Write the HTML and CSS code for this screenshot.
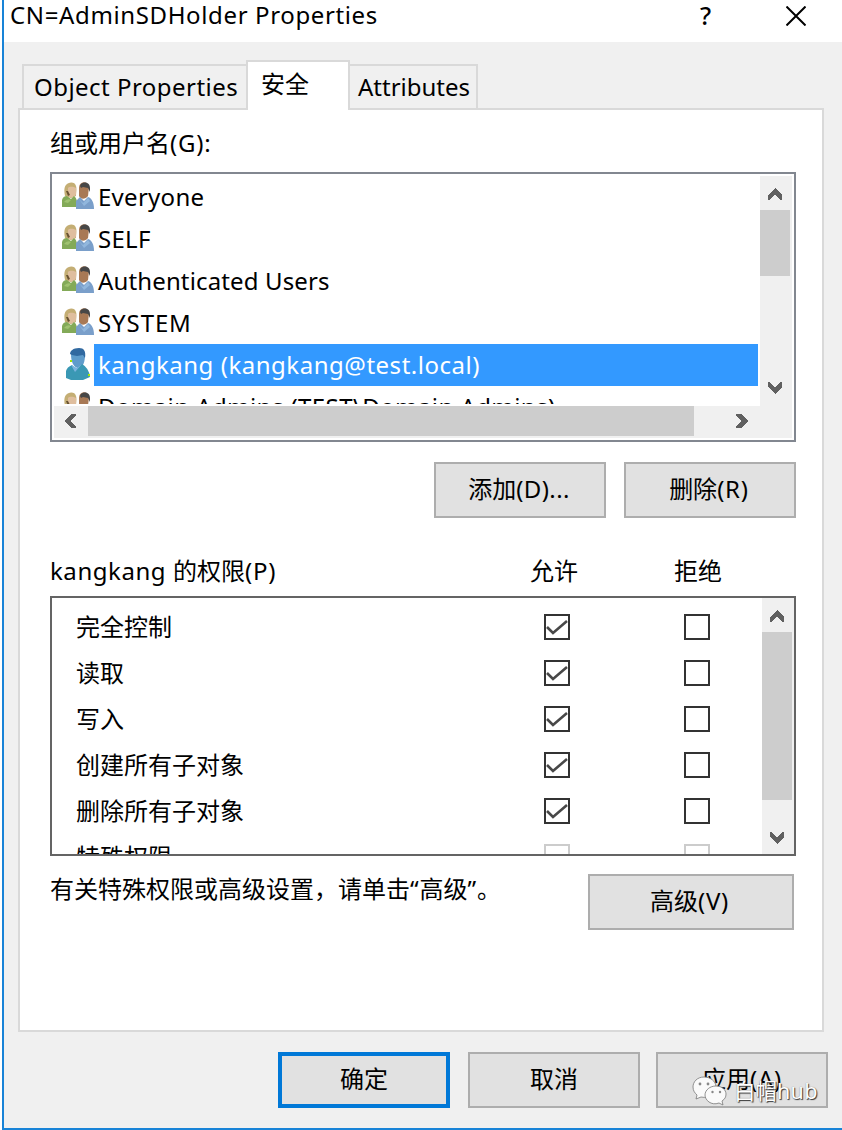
FILE: index.html
```html
<!DOCTYPE html>
<html lang="zh-CN">
<head>
<meta charset="utf-8">
<title>CN=AdminSDHolder Properties</title>
<link rel="stylesheet" href="styles.css">
</head>
<body>
<svg class="defs" aria-hidden="true">
  <symbol id="group" viewBox="0 0 32 28">
    <path d="M3 14C2 10 2 5 4 3 6 0 13-1 14 4c1 3 0 7 0 10l-5 2z" fill="#c4ae74"/>
    <path d="M6 6c2-2 6-1 8 0v6c-1 4-6 5-8 1z" fill="#dfbe9e"/>
    <path d="M4 9h2l2 4-2 1z" fill="#695332"/>
    <path d="M0 25V18q1-4 5-4l4 3 3-3q4 3 3 11z" fill="#83aa58"/>
    <path d="M2 20q3-4 7-2l-3 3z" fill="#9fc270"/>
    <path d="M17 6c0-7 9-8 10-1l-1 9c-3 4-8 3-9 0z" fill="#a87955"/>
    <path d="M18 4c1-5 10-5 10 2v4l-2-4-5-1-2 1z" fill="#474747"/>
    <path d="M14 27v-8l4-4 4 4 4-4c4 1 6 6 6 12z" fill="#7a9fca"/>
    <path d="M17 17l4 4 5-5 2 3-6 5z" fill="#91b7dd"/>
  </symbol>
  <symbol id="user" viewBox="0 0 24 32">
    <path d="M5 6c0 7 2 13 7 14 6-1 7-7 7-14z" fill="#5f9ccb"/>
    <path d="M4 6c0-3 3-6 9-6 5 0 7 3 6 10l-2-3-6 1-5-1z" fill="#3169a0"/>
    <path d="M0 30V23q1-4 6-6l4 4 6-5q7 4 8 13l-7 3H5z" fill="#3a98b4"/>
    <path d="M5 17l4 7 7-8-5 4z" fill="#7bb4de"/>
    <path d="M4 12h2v2H4zM22 26h2v2h-2z" fill="#a4e900"/>
  </symbol>
  <symbol id="chev" viewBox="0 0 14 12"><path d="M0 7L7 0l7 7v5h-2L7 6 2 12H0z" fill="#606060"/></symbol>
</svg>
<main class="window">
  <header class="titlebar">
    <span class="title t-title">CN=AdminSDHolder Properties</span>
    <span class="help">?</span>
    <svg class="close" viewBox="0 0 20 20"><path d="M.5.5l19 19M19.5.5l-19 19"/></svg>
  </header>
  <nav class="tabs">
    <div class="tab tab-object"><span class="t-object">Object Properties</span></div>
    <div class="tab tab-active">安全</div>
    <div class="tab tab-attr"><span class="t-attr">Attributes</span></div>
  </nav>
  <section class="panel">
    <div class="label label-groups">组或用户名<span class="t-par">(G):</span></div>
    <div class="groups">
      <div class="groups-top">
        <ul class="names">
          <li><svg class="ico"><use href="#group"/></svg><span class="t-everyone">Everyone</span></li>
          <li><svg class="ico"><use href="#group"/></svg><span class="t-self">SELF</span></li>
          <li><svg class="ico"><use href="#group"/></svg><span class="t-auth">Authenticated Users</span></li>
          <li><svg class="ico"><use href="#group"/></svg><span class="t-system">SYSTEM</span></li>
          <li class="selected"><svg class="ico ico-user"><use href="#user"/></svg><span class="t-kang">kangkang (kangkang@test.local)</span></li>
          <li><svg class="ico"><use href="#group"/></svg><span class="t-domain">Domain Admins (TEST\Domain Admins)</span></li>
        </ul>
        <div class="vbar">
          <svg class="chev"><use href="#chev"/></svg>
          <div class="thumb"></div>
          <svg class="chev down"><use href="#chev"/></svg>
        </div>
      </div>
      <div class="hbar">
        <svg class="chev left"><use href="#chev"/></svg>
        <div class="thumb"></div>
        <svg class="chev right"><use href="#chev"/></svg>
      </div>
    </div>
    <div class="actions">
      <div class="btn"><span>添加<span class="t-add">(D)...</span></span></div>
      <div class="btn"><span>删除<span class="t-par">(R)</span></span></div>
    </div>
    <div class="perm-head">
      <span class="who"><span class="t-who">kangkang </span>的权限<span class="t-par">(P)</span></span>
      <span class="allow">允许</span>
      <span>拒绝</span>
    </div>
    <div class="perms">
      <ul class="perm-list">
        <li><span>完全控制</span><i class="box"><svg viewBox="0 0 22 22"><path d="M1 11l6 6L21 5"/></svg></i><i class="box"></i></li>
        <li><span>读取</span><i class="box"><svg viewBox="0 0 22 22"><path d="M1 11l6 6L21 5"/></svg></i><i class="box"></i></li>
        <li><span>写入</span><i class="box"><svg viewBox="0 0 22 22"><path d="M1 11l6 6L21 5"/></svg></i><i class="box"></i></li>
        <li><span>创建所有子对象</span><i class="box"><svg viewBox="0 0 22 22"><path d="M1 11l6 6L21 5"/></svg></i><i class="box"></i></li>
        <li><span>删除所有子对象</span><i class="box"><svg viewBox="0 0 22 22"><path d="M1 11l6 6L21 5"/></svg></i><i class="box"></i></li>
        <li class="disabled"><span>特殊权限</span><i class="box"></i><i class="box"></i></li>
      </ul>
      <div class="vbar">
        <svg class="chev"><use href="#chev"/></svg>
        <div class="thumb"></div>
        <svg class="chev down"><use href="#chev"/></svg>
      </div>
    </div>
    <div class="advanced">
      <span class="hint">有关特殊权限或高级设置，请单击<span class="t-quote">“</span>高级<span class="t-quote">”</span>。</span>
      <div class="btn btn-wide"><span>高级<span class="t-par">(V)</span></span></div>
    </div>
  </section>
  <footer class="footer">
    <div class="btn btn-default">确定</div>
    <div class="btn">取消</div>
    <div class="btn btn-apply"><span>应用<span class="t-par">(A)</span></span>
      <div class="mark">
        <svg viewBox="0 0 36 31"><g fill="#fafafa" stroke="#777" stroke-width=".8"><path d="M12 1C5 1 1 6 1 11c0 4 2 6 4 8l-1 4 5-2c9 2 15-4 15-10S18 1 12 1z"/><path d="M24 10c-6 0-11 4-11 9s6 11 14 8l4 2-1-4c3-2 4-4 4-7 0-4-4-8-10-8z"/></g><g fill="#888"><circle cx="8" cy="8" r="1.4"/><circle cx="16" cy="8" r="1.4"/><circle cx="20.500" cy="16" r="1.200"/><circle cx="28" cy="16" r="1.200"/></g></svg>
        <span>白帽<span class="t-hub">hub</span></span>
      </div>
    </div>
  </footer>
</main>
</body>
</html>
```
FILE: styles.css
```css
* { box-sizing: border-box; }
body {
  margin: 0;
  padding-left: 2px;
  width: 842px;
  height: 1130px;
  overflow: hidden;
  background: #fff;
  color: #000;
  font: 24px/32px "Noto Sans", "Noto Sans CJK SC", sans-serif;
}
.defs { position: absolute; width: 0; height: 0; }
ul { margin: 0; padding: 0; list-style: none; }
span { white-space: nowrap; }
.window {
  height: 1130px;
  border-left: 2px solid #1883d7;
  border-bottom: 2px solid #1883d7;
  background: #f0f0f0;
}
.titlebar {
  display: flex;
  align-items: flex-start;
  height: 42px;
  padding-left: 6px;
  background: #fff;
}
.title { width: 690px; margin-top: -1px; }
.help { width: 82px; margin-top: -1px; font-size: 25px; font-weight: 500; }
.close { width: 20px; height: 20px; margin-top: 6px; margin-left: 4px; fill: none; stroke: #000; stroke-width: 2; }

/* tracking per string */
.t-title { letter-spacing: .63px; }
.t-object { letter-spacing: .47px; }
.t-everyone { letter-spacing: .28px; }
.t-self { letter-spacing: .3px; }
.t-auth { letter-spacing: .14px; }
.t-system { letter-spacing: .9px; }
.t-kang { letter-spacing: .52px; }
.t-domain { letter-spacing: .42px; }
.t-who { letter-spacing: .55px; }
.t-par { letter-spacing: .8px; }
.t-add { letter-spacing: .4px; }
.t-quote { letter-spacing: .9px; }
.t-hub { letter-spacing: .3px; }

.tabs {
  display: flex;
  align-items: flex-end;
  height: 68px;
  margin-bottom: -2px;
  padding-left: 18px;
  position: relative;
  z-index: 1;
}
.tab { height: 46px; border: 2px solid #d9d9d9; padding: 5px 0 0 10px; }
.tab-object { width: 226px; }
.tab-active { width: 104px; height: 50px; margin-left: -2px; padding: 6px 0 0 13px; background: #fff; border-bottom: 0; }
.tab-attr { width: 130px; margin-left: -2px; padding-left: 8px; }

.panel {
  width: 806px;
  height: 924px;
  margin-left: 14px;
  padding: 0 26px 0 30px;
  border: 2px solid #d9d9d9;
  background: #fff;
}
.label-groups { height: 62px; padding-top: 17px; }

.groups { width: 746px; height: 270px; padding: 2px; border: 2px solid #828790; }
.groups-top { display: flex; height: 230px; }
.names { width: 706px; height: 228px; overflow: hidden; }
.names li { display: flex; height: 42px; padding-left: 8px; }
.names li span { flex: 1; height: 42px; margin-right: 2px; padding: 5px 0 0 4px; }
.names .ico { width: 32px; height: 28px; margin-top: 6px; }
.names .ico-user { width: 24px; height: 32px; margin: 4px 4px 0; }
.names .selected span { background: #3399ff; color: #fff; }
.vbar { display: flex; flex-direction: column; align-items: flex-start; width: 32px; background: #f0f0f0; }
.vbar .thumb { width: 30px; background: #cdcdcd; }
.chev { width: 14px; height: 12px; margin: 12px 0 10px 8px; shape-rendering: crispEdges; }
.down { transform: rotate(180deg); margin-top: auto; }
.groups .vbar .thumb { height: 66px; }
.groups .down { margin-bottom: 12px; }
.hbar { display: flex; align-items: flex-start; height: 32px; width: 738px; background: #f0f0f0; }
.hbar .thumb { width: 606px; height: 30px; margin-left: 11px; background: #cdcdcd; }
.left { transform: rotate(-90deg); margin: 9px 0 0 9px; }
.right { transform: rotate(90deg); margin: 9px 0 0 41px; }

.btn {
  display: flex;
  align-items: center;
  justify-content: center;
  width: 172px;
  height: 56px;
  padding-bottom: 2px;
  border: 2px solid #adadad;
  background: #e1e1e1;
}
.actions { display: flex; justify-content: flex-end; gap: 18px; margin-top: 20px; }
.actions .btn { padding-right: 2px; }

.perm-head { display: flex; height: 78px; padding-top: 37px; }
.who { width: 480px; }
.allow { width: 144px; }
.perms { display: flex; justify-content: space-between; width: 746px; height: 260px; border: 2px solid #646464; overflow: hidden; }
.perm-list { height: 256px; padding-top: 6px; overflow: hidden; }
.perm-list li { display: flex; align-items: center; height: 46px; padding-left: 24px; }
.perm-list span { width: 468px; }
.box { width: 26px; height: 26px; margin-right: 114px; border: 2px solid #333; }
.box + .box { margin-right: 0; }
.box svg { display: block; width: 22px; height: 22px; fill: none; stroke: #484848; stroke-width: 2.6; }
.disabled .box { border-color: #ccc; }
.perms .vbar .thumb { height: 168px; }

.advanced { display: flex; justify-content: space-between; width: 744px; margin-top: 18px; }
.hint { margin-top: -1px; }
.btn-wide { width: 206px; padding-right: 3px; }

.footer { display: flex; gap: 18px; margin: 20px 0 0 274px; }
.btn-default { border: 4px solid #0078d7; }
.btn-apply { position: relative; margin-left: -2px; }
.mark { position: absolute; left: 34px; top: 21px; display: flex; align-items: center; color: #fff; font-size: 21.5px; text-shadow: 1px 1px 1px #333, 0 0 1px #777; }
.mark svg { width: 36px; height: 31px; margin-right: 6px; }
```
